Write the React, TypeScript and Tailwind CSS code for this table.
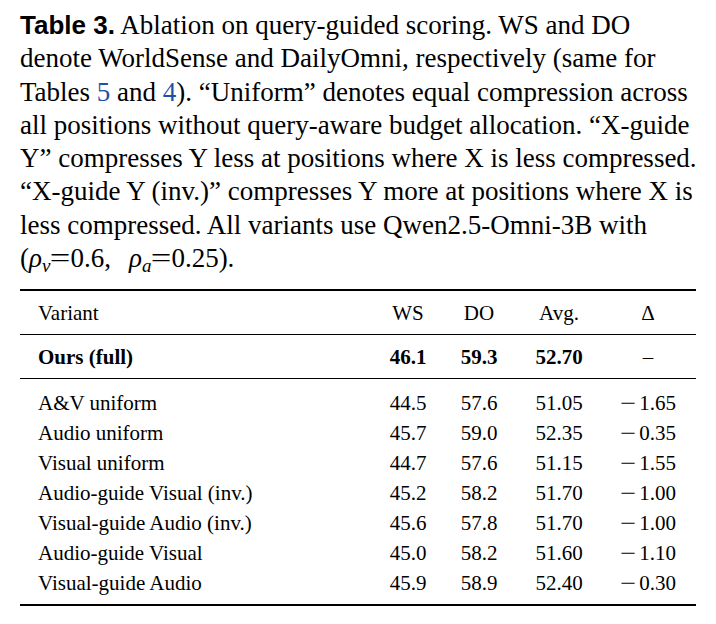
import React from "react";

const serif = { fontFamily: '"Liberation Serif", "Times New Roman", serif' };

const rows: [string, string, string, string, string][] = [
  ["A&V uniform", "44.5", "57.6", "51.05", "1.65"],
  ["Audio uniform", "45.7", "59.0", "52.35", "0.35"],
  ["Visual uniform", "44.7", "57.6", "51.15", "1.55"],
  ["Audio-guide Visual (inv.)", "45.2", "58.2", "51.70", "1.00"],
  ["Visual-guide Audio (inv.)", "45.6", "57.8", "51.70", "1.00"],
  ["Audio-guide Visual", "45.0", "58.2", "51.60", "1.10"],
  ["Visual-guide Audio", "45.9", "58.9", "52.40", "0.30"],
];

const grid = "grid grid-cols-[352px_72px_70px_90px_88px_4px] items-center";

function Eq() {
  return <span className="inline-block w-[20px] text-center scale-x-[1.35]">=</span>;
}

export default function App() {
  return (
    <div className="w-[716px] h-[624px] bg-white text-black overflow-hidden" style={serif}>
      <div className="pl-[20px] pt-[9px] text-[27px] leading-[33.3px] whitespace-nowrap">
        <div>
          <span className="font-bold text-[26px]" style={{ fontFamily: '"Liberation Sans", Arial, sans-serif' }}>
            Table 3.
          </span>{" "}
          Ablation on query-guided scoring. WS and DO
        </div>
        <div>denote WorldSense and DailyOmni, respectively (same for</div>
        <div>
          Tables <span className="text-[#1f4fa8]">5</span> and <span className="text-[#1f4fa8]">4</span>). “Uniform” denotes equal compression across
        </div>
        <div>all positions without query-aware budget allocation. “X-guide</div>
        <div>Y” compresses Y less at positions where X is less compressed.</div>
        <div>“X-guide Y (inv.)” compresses Y more at positions where X is</div>
        <div>less compressed. All variants use Qwen2.5-Omni-3B with</div>
        <div className="h-[33.3px]">
          (<i>ρ</i>
          <span className="italic text-[19px] align-[-5px] leading-none">v</span>
          <Eq />0.6,
          <span className="inline-block w-[18px]"></span>
          <i>ρ</i>
          <span className="italic text-[19px] align-[-5px] leading-none">a</span>
          <Eq />0.25).
        </div>
      </div>

      <div className="ml-[20px] mt-[14px] w-[676px] text-[21px] leading-[30px]">
        <div className="border-t-2 border-black" />
        <div className={`${grid} h-[43px]`}>
          <div className="pl-[18px]">Variant</div>
          <div className="text-center">WS</div>
          <div className="text-center">DO</div>
          <div className="text-center">Avg.</div>
          <div className="text-center">Δ</div>
          <div />
        </div>
        <div className="border-t border-black" />
        <div className={`${grid} h-[43px] font-bold`}>
          <div className="pl-[18px]">Ours (full)</div>
          <div className="text-center">46.1</div>
          <div className="text-center">59.3</div>
          <div className="text-center">52.70</div>
          <div className="text-center font-normal">–</div>
          <div />
        </div>
        <div className="border-t border-black" />
        <div className="pt-[9px] pb-[6px]">
          {rows.map((r) => (
            <div key={r[0]} className={`${grid} h-[30px]`}>
              <div className="pl-[18px]">{r[0]}</div>
              <div className="text-center">{r[1]}</div>
              <div className="text-center">{r[2]}</div>
              <div className="text-center">{r[3]}</div>
              <div className="text-center">
                <span className="inline-block w-[19px] text-left scale-x-[1.35] origin-left">−</span>
                {r[4]}
              </div>
              <div />
            </div>
          ))}
        </div>
        <div className="border-t-2 border-black" />
      </div>
    </div>
  );
}
